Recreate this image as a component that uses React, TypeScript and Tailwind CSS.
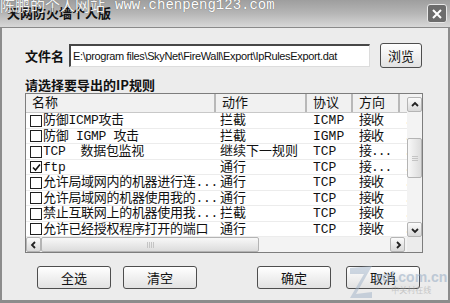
import React from "react";

const cjk = { fontFamily: '"Noto Sans CJK SC", sans-serif' };
const list = { fontFamily: '"Liberation Mono", "Noto Sans CJK SC", monospace' };

const rows = [
  { name: "防御ICMP攻击", action: "拦截", proto: "ICMP", dir: "接收", checked: false },
  { name: "防御 IGMP 攻击", action: "拦截", proto: "IGMP", dir: "接收", checked: false },
  { name: "TCP  数据包监视", action: "继续下一规则", proto: "TCP", dir: "接...", checked: false },
  { name: "ftp", action: "通行", proto: "TCP", dir: "接...", checked: true },
  { name: "允许局域网内的机器进行连...", action: "通行", proto: "TCP", dir: "接收", checked: false },
  { name: "允许局域网的机器使用我的...", action: "通行", proto: "TCP", dir: "接收", checked: false },
  { name: "禁止互联网上的机器使用我...", action: "拦截", proto: "TCP", dir: "接收", checked: false },
  { name: "允许已经授权程序打开的端口", action: "通行", proto: "TCP", dir: "接收", checked: false },
];

function Check({ on }: { on: boolean }) {
  return (
    <span className="w-[12px] h-[12px] border-[1.5px] border-[#1e1e1e] bg-white flex items-center justify-center shrink-0">
      {on && (
        <svg width="9" height="9" viewBox="0 0 9 9">
          <path d="M1 4.5 L3.5 7 L8 1.5" stroke="#111" strokeWidth="1.6" fill="none" />
        </svg>
      )}
    </span>
  );
}

function ArrowBtn({ dir }: { dir: "up" | "down" | "left" | "right" }) {
  const d = {
    up: "M2 6 L5 3 L8 6",
    down: "M2 4 L5 7 L8 4",
    left: "M6 2 L3 5 L6 8",
    right: "M4 2 L7 5 L4 8",
  }[dir];
  return (
    <div className="w-[15px] h-[15px] shrink-0 rounded-[2px] border border-[#b4b4b4] bg-gradient-to-b from-[#fbfbfb] to-[#d9d9d9] flex items-center justify-center">
      <svg width="10" height="10" viewBox="0 0 10 10">
        <path d={d} stroke="#222" strokeWidth="1.8" fill="none" />
      </svg>
    </div>
  );
}

function XpButton({ label }: { label: string }) {
  return (
    <button
      style={cjk}
      className="w-[74px] h-[23px] rounded-[3px] border border-[#4e4e4e] bg-gradient-to-b from-[#ffffff] to-[#e2e2e2] text-[13px] leading-none text-[#111] flex items-center justify-center"
    >
      {label}
    </button>
  );
}

export default function App() {
  return (
    <div className="w-[450px] h-[303px] relative overflow-hidden bg-[#ececec] flex flex-col">
      {/* TITLE BAR */}
      <div className="h-[28px] shrink-0 flex items-center justify-between pl-[7px] pr-[3px] bg-gradient-to-b from-[#9e9e9e] via-[#b6b6b6] to-[#d8d8d8] border-b border-[#8a8a8a]">
        <span style={cjk} className="text-[13px] font-bold text-[#111] mt-[-2px]">
          天网防火墙个人版
        </span>
        <div className="w-[20px] h-[19px] rounded-[3px] bg-[#6c6c6c] border border-[#e8e8e8] flex items-center justify-center">
          <svg width="12" height="12" viewBox="0 0 12 12">
            <path d="M2 2 L10 10 M10 2 L2 10" stroke="#fff" strokeWidth="2" />
          </svg>
        </div>
      </div>

      {/* BODY */}
      <div className="flex-1 flex flex-col border-x-[2px] border-b-[3px] border-[#8c8c8c] pl-[23px] pr-[25px]">
        {/* FILE NAME */}
        <div className="flex items-center mt-[15px] h-[25px]">
          <span style={cjk} className="text-[13px] font-bold text-[#111] w-[44px]">
            文件名
          </span>
          <div className="w-[301px] h-[23px] bg-white border-t-[2px] border-l-[2px] border-[#474747] border-r border-b border-r-[#dcdcdc] border-b-[#dcdcdc] flex items-center pl-[2px] overflow-hidden">
            <span
              style={{ fontFamily: '"Liberation Sans", sans-serif' }}
              className="text-[11px] tracking-[-0.35px] text-[#111] whitespace-nowrap"
            >
              E:\program files\SkyNet\FireWall\Export\IpRulesExport.dat
            </span>
          </div>
          <div className="ml-[10px]">
            <button
              style={cjk}
              className="w-[42px] h-[25px] rounded-[3px] border border-[#4e4e4e] bg-gradient-to-b from-[#ffffff] to-[#e2e2e2] text-[13px] leading-none text-[#111]"
            >
              浏览
            </button>
          </div>
        </div>

        {/* LABEL */}
        <div style={cjk} className="text-[13px] font-bold text-[#111] mt-[8px] leading-[17px]">
          请选择要导出的IP规则
        </div>

        {/* LIST */}
        <div className="w-[398px] h-[160px] border border-[#7d7d7d] bg-white grid grid-cols-[1fr_15px] grid-rows-[1fr_15px]">
          <div className="overflow-hidden" style={list}>
            <div className="w-[420px] grid grid-cols-[190px_91px_46px_47px_46px] h-[19px] bg-[#f1f1f1] border-b border-[#c8c8c8] text-[13px] leading-[19px] text-[#111]">
              {["名称", "动作", "协议", "方向", ""].map((h, i) => (
                <div key={i} className="pl-[6px] border-r-2 border-r-[#b8b8b8] whitespace-nowrap overflow-hidden">
                  {h || "[ "}
                </div>
              ))}
            </div>
            {rows.map((r, i) => (
              <div
                key={i}
                className="w-[420px] grid grid-cols-[190px_91px_46px_47px_46px] h-[15.5px] border-b border-[#ececec] text-[13px] leading-[15px] text-[#111] whitespace-pre"
              >
                <div className="flex items-center pl-[4px] gap-[1px] overflow-hidden">
                  <Check on={r.checked} />
                  <span className="tracking-[-0.3px]">{r.name}</span>
                </div>
                <div className="pl-[4px] overflow-hidden">{r.action}</div>
                <div className="pl-[6px] overflow-hidden">{r.proto}</div>
                <div className="pl-[6px] overflow-hidden tracking-[-1px]">{r.dir}</div>
                <div className="pl-[4px] text-[#888]">.</div>
              </div>
            ))}
          </div>

          {/* V SCROLL */}
          <div className="flex flex-col bg-[#f3f3f3] pt-[3px]">
            <ArrowBtn dir="up" />
            <div className="h-[26px]" />
            <div className="h-[40px] rounded-[2px] border border-[#b4b4b4] bg-gradient-to-r from-[#f8f8f8] to-[#dcdcdc] flex flex-col items-center justify-center gap-[1px]">
              <div className="w-[6px] h-px bg-[#c4c4c4]" />
              <div className="w-[6px] h-px bg-[#c4c4c4]" />
              <div className="w-[6px] h-px bg-[#c4c4c4]" />
            </div>
            <div className="flex-1" />
            <ArrowBtn dir="down" />
          </div>

          {/* H SCROLL */}
          <div className="flex bg-[#f3f3f3] pr-[2px]">
            <ArrowBtn dir="left" />
            <div className="w-[218px] h-[15px] rounded-[2px] border border-[#b4b4b4] bg-gradient-to-b from-[#f8f8f8] to-[#dcdcdc] flex items-center justify-center gap-[1px]">
              <div className="w-px h-[6px] bg-[#c4c4c4]" />
              <div className="w-px h-[6px] bg-[#c4c4c4]" />
              <div className="w-px h-[6px] bg-[#c4c4c4]" />
              <div className="w-px h-[6px] bg-[#c4c4c4]" />
            </div>
            <div className="flex-1" />
            <ArrowBtn dir="right" />
          </div>
          <div className="bg-[#ececec]" />
        </div>

        {/* BUTTONS */}
        <div className="flex mt-[13px] pl-[12px]">
          <XpButton label="全选" />
          <div className="ml-[12px]">
            <XpButton label="清空" />
          </div>
          <div className="ml-[60px]">
            <XpButton label="确定" />
          </div>
          <div className="ml-[15px]">
            <XpButton label="取消" />
          </div>
        </div>
      </div>

      {/* WATERMARKS */}
      <div className="absolute left-0 top-[-4px] flex items-center gap-[6px] pointer-events-none text-white [text-shadow:0_0_1px_#555]">
        <span style={cjk} className="text-[15px] leading-[18px] opacity-90">陈鹏的个人网站</span>
        <span style={{ fontFamily: '"Liberation Mono", monospace' }} className="text-[14px] leading-[18px] ml-[4px]">
          www.chenpeng123.com
        </span>
      </div>
      <div className="absolute left-[350px] top-[266px] flex items-center pointer-events-none opacity-50">
        <svg width="22" height="32" viewBox="0 0 22 32">
          <path d="M0 2 L22 0 L6 28 L22 26 L22 32 L0 32 L14 8 L0 8 Z" fill="#9fb2c8" />
        </svg>
        <div className="flex flex-col items-center ml-[3px]">
          <span style={{ fontFamily: '"Liberation Sans", sans-serif' }} className="text-[14px] leading-[15px] font-bold text-[#8fa6c0]">
            zol.com.cn
          </span>
          <span style={cjk} className="text-[8px] leading-[10px] text-[#a0a0a0]">中关村在线</span>
        </div>
      </div>
    </div>
  );
}
